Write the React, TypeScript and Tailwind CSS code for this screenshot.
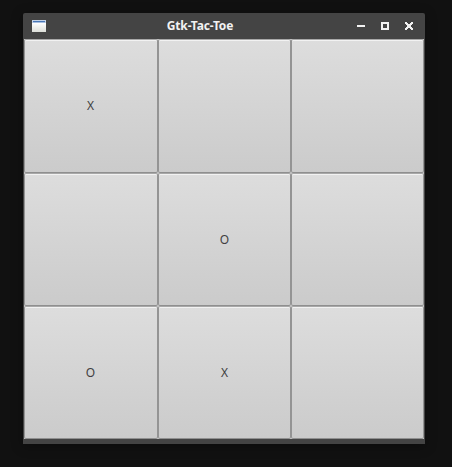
import React from "react";

const board: string[] = ["X", "", "", "", "O", "", "O", "X", ""];

function WindowIcon() {
  return (
    <svg width="14" height="12" viewBox="0 0 14 12" shapeRendering="crispEdges">
      <defs>
        <linearGradient id="pane" x1="0" y1="0" x2="0" y2="1">
          <stop offset="0" stopColor="#ffffff" />
          <stop offset="1" stopColor="#dcded8" />
        </linearGradient>
      </defs>
      <rect width="14" height="12" fill="#c3d2e6" />
      <rect x="1" y="1" width="12" height="1" fill="#4a78b8" />
      <rect x="1" y="2" width="12" height="1" fill="#a9c0e0" />
      <rect x="0" y="3" width="14" height="9" fill="url(#pane)" />
    </svg>
  );
}

function Controls() {
  return (
    <div className="flex items-center gap-4 text-[#f2f2f2]">
      <svg width="8" height="8" shapeRendering="crispEdges" fill="currentColor">
        <rect y="3" width="8" height="2" />
      </svg>
      <svg width="8" height="8" shapeRendering="crispEdges" fill="none" stroke="currentColor" strokeWidth="2">
        <rect x="1" y="1" width="6" height="6" />
      </svg>
      <svg width="8" height="8" shapeRendering="crispEdges" fill="currentColor">
        <path d="M0 0h2v1h1v1h2v-1h1v-1h2v2h-1v1h-1v2h1v1h1v2h-2v-1h-1v-1h-2v1h-1v1h-2v-2h1v-1h1v-2h-1v-1h-1z" />
      </svg>
    </div>
  );
}

export default function App() {
  return (
    <div className="h-[467px] w-[452px] overflow-hidden bg-[#111111] pt-[13px] pl-[23px] font-['Noto_Sans',sans-serif]">
      <div className="h-[431px] w-[402px] overflow-hidden rounded-t-[2px] bg-[#444444] px-px shadow-[0_2px_12px_rgba(0,0,0,0.35)]">
        <div className="grid h-[26px] grid-cols-[1fr_auto_1fr] items-center pr-[11px] pl-2">
          <WindowIcon />
          <span className="-ml-[45px] text-[12px] leading-[26px] font-bold tracking-[-0.16px] text-[#f2f2f2]">Gtk-Tac-Toe</span>
          <div className="flex justify-end">
            <Controls />
          </div>
        </div>
        <div className="grid h-[400px] grid-cols-[134px_133px_133px] grid-rows-[134px_133px_133px] bg-[#cecece]">
          {board.map((mark, i) => (
            <button
              key={i}
              className={`flex items-center justify-center rounded-[2px] border border-t-[#a8a8a8] border-r-[#949494] border-b-[#8f8f8f] border-l-[#949494] bg-linear-to-b from-[#dddddd] to-[#cbcbcb] text-[12px] text-[#404040] shadow-[inset_0_1px_0_#f2f2f2] ${i % 3 === 0 ? "pr-px" : ""}`}
            >
              {mark}
            </button>
          ))}
        </div>
      </div>
    </div>
  );
}
